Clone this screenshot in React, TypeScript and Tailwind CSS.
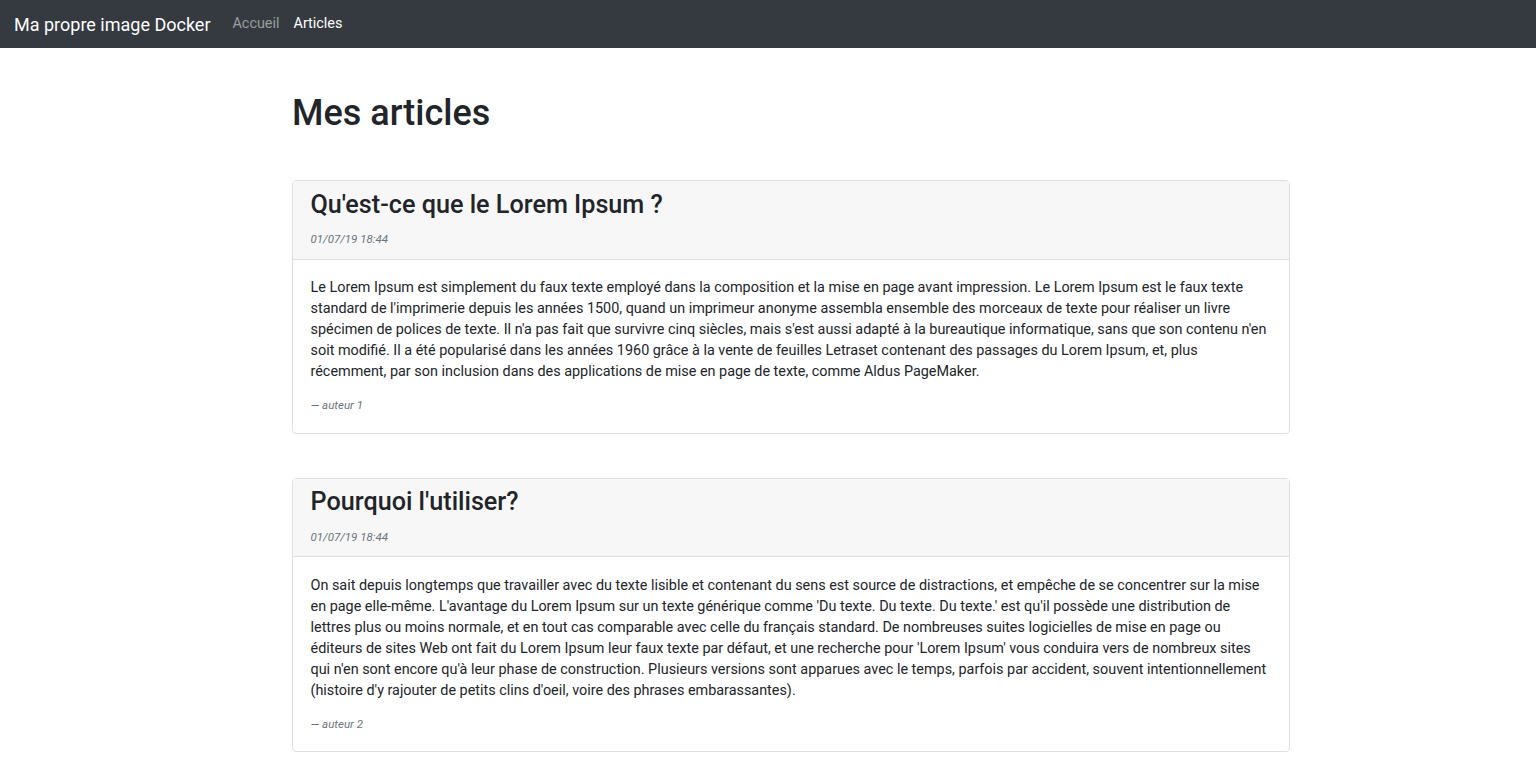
const articles = [
  {
    title: "Qu'est-ce que le Lorem Ipsum ?",
    date: "01/07/19 18:44",
    lines: [
      "Le Lorem Ipsum est simplement du faux texte employé dans la composition et la mise en page avant impression. Le Lorem Ipsum est le faux texte",
      "standard de l'imprimerie depuis les années 1500, quand un imprimeur anonyme assembla ensemble des morceaux de texte pour réaliser un livre",
      "spécimen de polices de texte. Il n'a pas fait que survivre cinq siècles, mais s'est aussi adapté à la bureautique informatique, sans que son contenu n'en",
      "soit modifié. Il a été popularisé dans les années 1960 grâce à la vente de feuilles Letraset contenant des passages du Lorem Ipsum, et, plus",
      "récemment, par son inclusion dans des applications de mise en page de texte, comme Aldus PageMaker.",
    ],
    author: "auteur 1",
  },
  {
    title: "Pourquoi l'utiliser?",
    date: "01/07/19 18:44",
    lines: [
      "On sait depuis longtemps que travailler avec du texte lisible et contenant du sens est source de distractions, et empêche de se concentrer sur la mise",
      "en page elle-même. L'avantage du Lorem Ipsum sur un texte générique comme 'Du texte. Du texte. Du texte.' est qu'il possède une distribution de",
      "lettres plus ou moins normale, et en tout cas comparable avec celle du français standard. De nombreuses suites logicielles de mise en page ou",
      "éditeurs de sites Web ont fait du Lorem Ipsum leur faux texte par défaut, et une recherche pour 'Lorem Ipsum' vous conduira vers de nombreux sites",
      "qui n'en sont encore qu'à leur phase de construction. Plusieurs versions sont apparues avec le temps, parfois par accident, souvent intentionnellement",
      "(histoire d'y rajouter de petits clins d'oeil, voire des phrases embarassantes).",
    ],
    author: "auteur 2",
  },
]

export default function App() {
  return (
    <div className="min-h-screen bg-white font-['Roboto',sans-serif] text-[14.4px] leading-[1.5] text-[#212529]">
      {/* navbar */}
      <nav className="flex h-12 items-center bg-[#343a40] px-[14px]">
        <span className="mr-[15px] text-[18px] text-white">Ma propre image Docker</span>
        <a className="px-[7px] text-[14.4px] text-white/50">Accueil</a>
        <a className="px-[7px] text-[14.4px] text-white">Articles</a>
      </nav>

      <main className="ml-[292px] w-[998px] pb-[15px]">
        <h1 className="mt-[44px] mb-[46px] text-[36px] font-medium leading-[42px]">Mes articles</h1>

        {articles.map((article, index) => (
          <div key={index} className="mb-[44px] rounded-[4px] border border-[#dfdfdf]">
            <div className="border-b border-[#dfdfdf] bg-[#f7f7f7] px-[17.5px] pt-[8.5px] pb-[11px]">
              <h2 className="text-[25.2px] font-medium leading-[29px]">{article.title}</h2>
              <div className="mt-[12.5px] text-[11.5px] italic leading-[16.8px] text-[#6c757d]">{article.date}</div>
            </div>
            <div className="px-[17.5px] pt-[17.5px] pb-[18.5px]">
              <p className="mb-[15px] whitespace-nowrap leading-[21px]">
                {article.lines.map((line, i) => (
                  <span key={i} className="block">{line}</span>
                ))}
              </p>
              <div className="text-[11.5px] italic leading-[16.8px] text-[#6c757d]">— {article.author}</div>
            </div>
          </div>
        ))}
      </main>
    </div>
  )
}
